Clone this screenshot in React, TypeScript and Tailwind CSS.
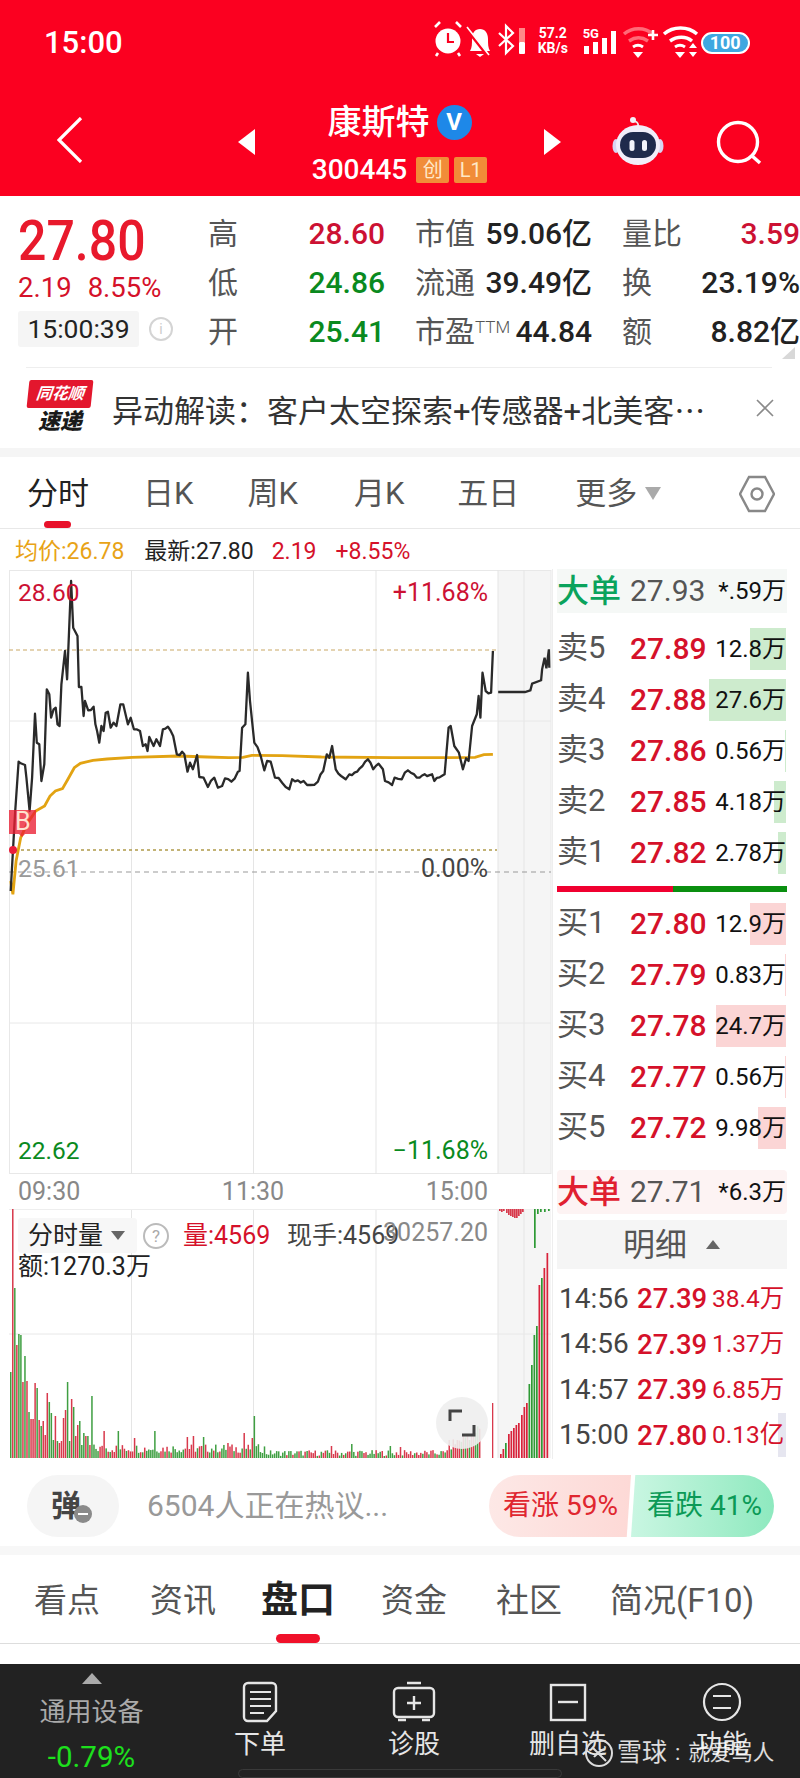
import React from 'react';

// price line and average line, in the coordinates of a 560x340 crop scaled 2.8 x 3
const priceLine = [
  [30, 990], [42, 760], [52, 602], [58, 607], [70, 612], [74, 650], [83, 750], [90, 650], [98, 458], [103, 545], [110, 550], [116, 660], [124, 610], [131, 385], [138, 400], [143, 470], [150, 445], [156, 440], [161, 490], [167, 495], [172, 370], [182, 270], [188, 355], [199, 60], [205, 200], [217, 225], [221, 378], [228, 378], [234, 465], [238, 420], [247, 448], [262, 437], [267, 490], [272, 510], [278, 545], [284, 495], [290, 510], [296, 455], [302, 452], [310, 500], [318, 485], [326, 495], [337, 430], [345, 430], [358, 490], [366, 470], [375, 505], [392, 510], [400, 555], [408, 550], [413, 570], [418, 528], [430, 555], [438, 535], [448, 555], [456, 505], [470, 497], [485, 525], [495, 580], [510, 572], [516, 580], [525, 632], [532, 605], [540, 625], [552, 582], [558, 648], [570, 650], [582, 678], [600, 650], [610, 680], [622, 675], [630, 652], [648, 662], [666, 632], [671, 630], [678, 500], [687, 490], [694, 335], [700, 420], [712, 545], [730, 585], [740, 628], [748, 600], [758, 602], [770, 650], [790, 665], [810, 685], [818, 655], [850, 660], [870, 672], [890, 662], [905, 630], [915, 580], [922, 590], [930, 555], [940, 625], [955, 645], [968, 655], [978, 640], [1000, 632], [1030, 595], [1045, 625], [1060, 608], [1072, 625], [1078, 660], [1098, 672], [1105, 650], [1125, 655], [1142, 628], [1175, 650], [1210, 640], [1216, 660], [1245, 640], [1256, 500], [1262, 495], [1272, 555], [1285, 575], [1296, 625], [1305, 592], [1312, 600], [1322, 495], [1335, 460], [1340, 405], [1345, 470], [1351, 335], [1360, 390], [1375, 395], [1380, 270],
];
const avgLine = [
  [30, 960], [36, 1000], [45, 900], [58, 830], [75, 790], [100, 750], [125, 735], [140, 705], [155, 690], [175, 683], [190, 655], [208, 620], [225, 607], [260, 598], [300, 594], [370, 589], [500, 585], [580, 588], [640, 590], [680, 589], [705, 583], [790, 584], [900, 588], [1100, 590], [1250, 590], [1330, 589], [1355, 581], [1380, 580],
];
const afterLine = [[1395, 393], [1470, 393], [1485, 388], [1490, 368], [1515, 358], [1518, 325], [1525, 290], [1530, 322], [1537, 265], [1538, 320]];

const toPts = (line: number[][]) => line.map(([x, y]) => `${(x / 2.8).toFixed(1)},${(y / 3 - 9).toFixed(1)}`).join(' ');

const rand = (i: number) => {
  const s = Math.sin(i * 12.9898) * 43758.5453;
  return s - Math.floor(s);
};

// long segments of the hand-read line get some minute-to-minute jitter
const jagged = priceLine.flatMap(([x, y], i) => {
  const next = priceLine[i + 1];
  if (!next || next[0] - x < 14) return [[x, y]];
  const n = Math.floor((next[0] - x) / 7);
  return Array.from({ length: n }, (_, k) => {
    const t = k / n;
    const noise = k === 0 ? 0 : (rand(i * 31 + k) - 0.5) * 14;
    return [x + (next[0] - x) * t, y + (next[1] - y) * t + noise];
  });
});

const earlyBars = [86, 249, 170, 113, 124, 123, 76, 102, 77, 46, 39, 39, 75, 70, 38, 32, 37, 23, 65, 56, 45, 18, 42, 17, 15, 17, 40, 48, 76, 17, 59, 51, 22, 33, 37, 13, 25, 22, 22, 13, 62];
const earlyColors = 'grgrggrgrgrrrgrgrrrgggrgrrrrggrgrrgggrgrg';
const spikes: Record<number, [number, string]> = {
  46: [27, 'r'], 53: [27, 'g'], 61: [20, 'r'], 71: [27, 'g'], 87: [21, 'r'], 90: [22, 'r'], 95: [21, 'g'], 107: [15, 'r'], 115: [25, 'r'], 119: [20, 'r'], 120: [42, 'g'], 158: [12, 'r'], 168: [14, 'g'], 187: [12, 'g'], 192: [11, 'r'],
};

const volumeBars = Array.from({ length: 232 }, (_, i) => {
  if (i < earlyBars.length) return { h: earlyBars[i], c: earlyColors[i] };
  if (spikes[i]) return { h: spikes[i][0], c: spikes[i][1] };
  const r = rand(i);
  let h = 5 + r * 9;
  if (i > 125 && i < 215) h = 2 + r * 6;
  if (i >= 215) h = 5 + r * 12 + (i - 215) * 1.1;
  const c = i > 120 && i < 135 ? 'g' : rand(i + 500) > 0.5 ? 'r' : 'g';
  return { h, c };
});

// after-hours panel, x + height
const panelBars = [
  [500, 4, 'r'], [502.5, 9, 'r'], [505, 15, 'g'], [508, 24, 'r'], [510.5, 27, 'r'], [513, 30, 'r'], [515.5, 33, 'r'], [518, 35, 'r'], [521, 43, 'r'], [523.5, 51, 'r'], [526, 55, 'r'], [528.5, 74, 'g'], [531, 93, 'g'], [533.5, 123, 'g'], [536, 132, 'g'], [538.5, 173, 'r'], [541, 180, 'g'], [543.5, 190, 'r'], [546.5, 205, 'r'],
] as [number, number, string][];
const panelTop = [[499, 2, 'r'], [501, 3, 'r'], [503, 2, 'r'], [506, 4, 'r'], [508, 6, 'r'], [510, 7, 'r'], [512, 8, 'r'], [514, 9, 'r'], [516, 9, 'r'], [518, 7, 'r'], [520, 5, 'r'], [522, 3, 'r'], [534, 39, 'g'], [537, 5, 'g'], [540, 3, 'g'], [544, 3, 'g'], [548, 2, 'g']] as [number, number, string][];

const sells = [
  ['卖5', '27.89', '12.8万', 36],
  ['卖4', '27.88', '27.6万', 77],
  ['卖3', '27.86', '0.56万', 1],
  ['卖2', '27.85', '4.18万', 12],
  ['卖1', '27.82', '2.78万', 8],
] as [string, string, string, number][];
const buys = [
  ['买1', '27.80', '12.9万', 36],
  ['买2', '27.79', '0.83万', 1],
  ['买3', '27.78', '24.7万', 70],
  ['买4', '27.77', '0.56万', 1],
  ['买5', '27.72', '9.98万', 28],
] as [string, string, string, number][];
const deals = [
  ['14:56', '27.39', '38.4万'],
  ['14:56', '27.39', '1.37万'],
  ['14:57', '27.39', '6.85万'],
  ['15:00', '27.80', '0.13亿'],
];

function QuoteRow({ a, b, c, d, e, f, bc }: { a: string; b: string; c: React.ReactNode; d: string; e: string; f: string; bc: string }) {
  return (
    <div className="flex h-[49px] items-center text-[30px] leading-none">
      <div className="flex w-[177px] justify-between">
        <span className="text-[#555]">{a}</span>
        <span className={`font-medium ${bc}`}>{b}</span>
      </div>
      <div className="ml-[30px] flex w-[177px] items-center justify-between">{c}</div>
      <div className="ml-[30px] flex w-[178px] justify-between">
        <span className="text-[#555]">{d}</span>
        <span className={`font-medium ${f}`}>{e}</span>
      </div>
    </div>
  );
}

function BookRow({ row, bar }: { row: [string, string, string, number]; bar: string }) {
  return (
    <div className="relative flex h-[51px] items-center pl-[4px]">
      <span className="w-[73px] text-[31px] text-[#555]">{row[0]}</span>
      <span className="text-[30px] font-medium text-[#d5112a]">{row[1]}</span>
      <div className="absolute right-[14px] top-1/2 h-[42px] -translate-y-1/2" style={{ width: row[3] }}>
        <div className={`h-full w-full ${bar}`} />
      </div>
      <span className="absolute right-[14px] text-[24px] text-[#111]">{row[2]}</span>
    </div>
  );
}

function StatusIcons() {
  return (
    <svg width="340" height="60" viewBox="0 0 340 60" className="block">
      {/* alarm */}
      <circle cx="27" cy="28" r="12.5" fill="#fff" />
      <path d="M27 20v9h6" stroke="#fb0020" strokeWidth="2.2" fill="none" />
      <path d="M14 14l5-5M35 9l5 5M17 40l-2 3M37 40l2 3" stroke="#fff" strokeWidth="2.6" />
      {/* muted bell */}
      <path d="M49 38c2-3 2-7 2-12 0-6 3-10 8-10s8 4 8 10c0 5 0 9 2 12z" fill="#fff" />
      <path d="M55 41h8l-4 3z" fill="#fff" />
      <path d="M45 15l22 28" stroke="#fb0020" strokeWidth="3.4" />
      <path d="M46 14l22 28" stroke="#fff" strokeWidth="1.6" />
      {/* bluetooth + small bar */}
      <path d="M78 20l14 13-7 7V13l7 7-14 13" stroke="#fff" strokeWidth="2.2" fill="none" />
      <rect x="98" y="15" width="6" height="14" fill="#f88" />
      <rect x="98" y="29" width="6" height="12" rx="1" fill="#fff" />
      {/* network signal */}
      <rect x="163" y="33" width="5" height="8" fill="#fff" />
      <rect x="172" y="29" width="5" height="12" fill="#fff" />
      <rect x="181" y="25" width="5" height="16" fill="#fff" />
      <rect x="190" y="18" width="5" height="23" fill="#fff" />
      {/* wifi one */}
      <path d="M203 21c8-7 21-7 29 0" stroke="#ff6a78" strokeWidth="3.4" fill="none" />
      <path d="M208 28c6-4 13-4 19 0" stroke="#ff6a78" strokeWidth="3.4" fill="none" />
      <path d="M212 34c3-2 7-2 10 0" stroke="#fff" strokeWidth="3" fill="none" />
      <path d="M212 39h10l-5 6z" fill="#fff" />
      <path d="M227 22h10M232 17v10" stroke="#fff" strokeWidth="2.6" />
      {/* wifi two */}
      <path d="M243 21c9-8 24-8 33 0" stroke="#fff" strokeWidth="3.4" fill="none" />
      <path d="M249 28c7-5 16-5 22 0" stroke="#fff" strokeWidth="3.4" fill="none" />
      <path d="M254 34c3-2 7-2 10 0" stroke="#fff" strokeWidth="3" fill="none" />
      <path d="M254 39h10l-5 6z" fill="#fff" />
      <path d="M268 35l4-5 4 5zM268 39l4 5 4-5z" fill="#fff" />
    </svg>
  );
}

function Robot() {
  return (
    <svg width="52" height="50" viewBox="0 0 52 50">
      <path d="M26 12c1-5-2-5-4-6" stroke="#eee" strokeWidth="1.8" fill="none" />
      <circle cx="21" cy="5" r="3" fill="#f3eef7" />
      <ellipse cx="4" cy="31" rx="3.5" ry="7" fill="#d8d4f2" />
      <ellipse cx="48" cy="31" rx="3.5" ry="7" fill="#d8d4f2" />
      <ellipse cx="26" cy="30" rx="22" ry="20" fill="#f1eefa" />
      <rect x="8" y="17" width="36" height="26" rx="13" fill="#1f2a4c" />
      <rect x="17.5" y="25" width="5" height="11" rx="2.5" fill="#f2f2fa" />
      <rect x="30" y="25" width="5" height="11" rx="2.5" fill="#f2f2fa" />
    </svg>
  );
}

export default function App() {
  return (
    <div className="relative flex h-[1778px] w-[800px] flex-col overflow-hidden bg-white font-[Roboto,'Noto_Sans_CJK_SC',sans-serif]">
      {/* red header */}
      <div className="h-[196px] shrink-0 bg-[#fb0020] text-white">
        <div className="flex h-[100px] pt-[13px]">
          <span className="ml-[44px] mt-[10px] text-[31px] font-medium leading-[40px]">15:00</span>
          <div className="relative ml-[298px]">
            <StatusIcons />
            <div className="absolute left-[117px] top-[13px] text-center text-[14px] font-bold leading-[15px]">
              57.2
              <br />
              KB/s
            </div>
            <span className="absolute left-[162px] top-[14px] text-[13px] font-bold leading-none">5G</span>
            <div className="absolute left-[280px] top-[19px] flex h-[22px] w-[49px] items-center justify-center rounded-full border-2 border-white bg-[#3fa7e0] text-[18px] font-bold leading-none">
              100
            </div>
          </div>
        </div>
        <div className="flex h-[96px] items-start">
          <svg width="26" height="46" viewBox="0 0 26 46" className="ml-[57px] mt-[17px]">
            <path d="M24 1L2 23l22 22" stroke="#fff" strokeWidth="3.2" fill="none" />
          </svg>
          <div className="ml-[155px] mt-[29px] h-0 w-0 border-y-[13px] border-r-[17px] border-y-transparent border-r-white" />
          <div className="flex w-[289px] flex-col items-center">
            <div className="flex h-[44px] items-center gap-[7px]">
              <span className="text-[34px] font-medium leading-none">康斯特</span>
              <div className="flex h-[35px] w-[35px] items-center justify-center rounded-full bg-[#1e88e8] text-[24px] font-bold leading-none">V</div>
            </div>
            <div className="mt-[12px] flex h-[28px] items-center gap-[5px]">
              <span className="mr-[4px] text-[28px] font-medium leading-none">300445</span>
              <span className="flex h-[26px] w-[33px] items-center justify-center rounded-[2px] bg-[#f18c38] text-[20px] leading-none text-[#ffe8c8]">创</span>
              <span className="flex h-[26px] w-[33px] items-center justify-center rounded-[2px] bg-[#f18c38] text-[20px] leading-none text-[#ffe8c8]">L1</span>
            </div>
          </div>
          <div className="mt-[29px] h-0 w-0 border-y-[13px] border-l-[17px] border-y-transparent border-l-white" />
          <div className="ml-[51px] mt-[15px]">
            <Robot />
          </div>
          <svg width="46" height="46" viewBox="0 0 46 46" className="ml-[52px] mt-[20px]">
            <circle cx="22" cy="22" r="19.5" stroke="#fff" strokeWidth="3.4" fill="none" />
            <path d="M35 35l9 8" stroke="#fff" strokeWidth="3.4" />
          </svg>
        </div>
      </div>

      {/* quote */}
      <div className="relative flex h-[172px] shrink-0">
        <div className="w-[208px] pl-[18px]">
          <div className="mt-[18px] origin-left scale-y-110 text-[50px] font-medium leading-[54px] text-[#e8192c]">27.80</div>
          <div className="mt-[5px] flex gap-[16px] text-[27.5px] leading-[30px] text-[#d5112a]">
            <span>2.19</span>
            <span>8.55%</span>
          </div>
          <div className="mt-[8px] flex items-center">
            <div className="flex h-[36px] w-[121px] items-center justify-center rounded-[3px] bg-[#f5f5f5] text-[26.5px] leading-none text-[#222]">15:00:39</div>
            <div className="ml-[10px] flex h-[24px] w-[24px] items-center justify-center rounded-full border-2 border-[#d4d4d4] text-[14px] leading-none text-[#ccc]">i</div>
          </div>
        </div>
        <div className="pt-[13px]">
          <QuoteRow
            a="高"
            b="28.60"
            bc="text-[#cc1133]"
            c={
              <>
                <span className="text-[#555]">市值</span>
                <span className="font-medium text-[#222]">59.06亿</span>
              </>
            }
            d="量比"
            e="3.59"
            f="text-[#cc1133]"
          />
          <QuoteRow
            a="低"
            b="24.86"
            bc="text-[#0a8a1e]"
            c={
              <>
                <span className="text-[#555]">流通</span>
                <span className="font-medium text-[#222]">39.49亿</span>
              </>
            }
            d="换"
            e="23.19%"
            f="text-[#222]"
          />
          <QuoteRow
            a="开"
            b="25.41"
            bc="text-[#0a8a1e]"
            c={
              <>
                <span className="text-[#555]">
                  市盈<sup className="text-[17px] font-light">TTM</sup>
                </span>
                <span className="font-medium text-[#222]">44.84</span>
              </>
            }
            d="额"
            e="8.82亿"
            f="text-[#222]"
          />
        </div>
        <div className="absolute bottom-[9px] right-[5px] h-0 w-0 border-b-[12px] border-l-[13px] border-b-[#d8d8d8] border-l-transparent" />
        <div className="absolute bottom-0 left-[26px] right-[28px] h-px bg-[#eee]" />
      </div>

      {/* news strip */}
      <div className="flex h-[80px] shrink-0 items-center">
        <div className="ml-[28px] flex h-[56px] w-[64px] flex-col items-center">
          <div className="flex h-[28px] w-[64px] -skew-x-6 items-center justify-center rounded-[2px] bg-[#e3172d] text-[16px] font-bold italic leading-none text-white">同花顺</div>
          <span className="mt-[2px] text-[22px] font-black italic leading-[24px] text-[#1a1a1a]">速递</span>
        </div>
        <span className="ml-[20px] mt-[4px] w-[643px] whitespace-nowrap text-[31px] leading-none text-[#333]">
          异动解读：客户太空探索+传感器+北美客<span className="font-['Noto_Sans_CJK_TC']">…</span>
        </span>
        <svg width="20" height="20" viewBox="0 0 20 20">
          <path d="M2 2l16 16M18 2L2 18" stroke="#8a8a8a" strokeWidth="1.6" />
        </svg>
      </div>
      <div className="h-[9px] shrink-0 bg-[#f5f5f5]" />

      {/* period tabs */}
      <div className="relative flex h-[72px] shrink-0 items-center border-b border-[#e8e8e8] pt-[2px] text-[31px] leading-none text-[#555]">
        <span className="ml-[27px] text-[#222]">分时</span>
        <span className="ml-[54px]">日K</span>
        <span className="ml-[54px]">周K</span>
        <span className="ml-[56px]">月K</span>
        <span className="ml-[53px]">五日</span>
        <span className="ml-[56px]">更多</span>
        <div className="ml-[8px] h-0 w-0 border-x-[8px] border-t-[13px] border-x-transparent border-t-[#aaa]" />
        <svg width="36" height="38" viewBox="0 0 36 38" className="ml-[78px]">
          <path d="M10 2h16l9 17-9 17H10L1 19z" stroke="#888" strokeWidth="2.4" fill="none" />
          <circle cx="18" cy="19" r="5.5" stroke="#888" strokeWidth="2.4" fill="none" />
        </svg>
        <div className="absolute bottom-0 left-[44px] h-[7px] w-[27px] rounded-full bg-[#e8112a]" />
      </div>

      {/* info line */}
      <div className="flex h-[40px] shrink-0 items-center pl-[15px] pt-[4px] text-[23px] leading-none">
        <span className="text-[#e8a317]">均价:26.78</span>
        <span className="ml-[20px] text-[#222]">最新:27.80</span>
        <span className="ml-[18px] text-[#d5112a]">2.19</span>
        <span className="ml-[19px] text-[#d5112a]">+8.55%</span>
      </div>

      <div className="flex h-[890px] shrink-0">
        {/* charts column */}
        <div className="w-[552px] shrink-0">
          <div className="relative mt-[1px] h-[604px]">
            <svg width="552" height="604" viewBox="0 0 552 604" className="block">
              <rect x="498" y="0" width="53" height="604" fill="#f5f5f5" />
              <rect x="9.5" y="0.5" width="541.5" height="603" fill="none" stroke="#e8e8e8" />
              {[131.5, 253.5, 376, 498, 524].map((x) => (
                <line key={x} x1={x} x2={x} y1="0" y2="604" stroke="#e5e5e5" />
              ))}
              {[151, 453].map((y) => (
                <line key={y} x1="9" x2="551" y1={y} y2={y} stroke="#e8e8e8" />
              ))}
              <line x1="9" x2="551" y1="302" y2="302" stroke="#999" strokeDasharray="5 4" />
              <line x1="9" x2="497" y1="80" y2="80" stroke="#c9a765" strokeDasharray="4 3" />
              <line x1="9" x2="497" y1="280" y2="280" stroke="#b09a4a" strokeDasharray="3 3" strokeWidth="1.5" />
              <polyline points={toPts(avgLine)} fill="none" stroke="#e2a312" strokeWidth="2.8" />
              <polyline points={toPts(jagged)} fill="none" stroke="#2a2a2a" strokeWidth="2.3" strokeLinejoin="round" />
              <polyline points={toPts(afterLine)} fill="none" stroke="#2a2a2a" strokeWidth="2.3" />
              <path d="M9 240h27v24H25l-3 3-3-3H9z" fill="#ea1e32" fillOpacity="0.78" />
              <circle cx="13" cy="280" r="4" fill="#ea1e3c" />
            </svg>
            <span className="absolute left-[15px] top-[239px] text-[25px] leading-[26px] text-[#ffe1d0]">B</span>
            <span className="absolute left-[18px] top-[10px] text-[24.5px] leading-[26px] text-[#cc1133]">28.60</span>
            <span className="absolute right-[64px] top-[10px] text-[25px] leading-[26px] text-[#cc1133]">+11.68%</span>
            <span className="absolute left-[18px] top-[286px] text-[24.5px] leading-[26px] text-[#999]">25.61</span>
            <span className="absolute right-[64px] top-[286px] text-[25px] leading-[26px] text-[#444]">0.00%</span>
            <span className="absolute bottom-[10px] left-[18px] text-[24.5px] leading-[26px] text-[#0a8a1e]">22.62</span>
            <span className="absolute bottom-[10px] right-[64px] text-[25px] leading-[26px] text-[#0a8a1e]">−11.68%</span>
          </div>

          <div className="flex h-[35px] items-center justify-between pl-[18px] pr-[64px] text-[25px] leading-none text-[#888]">
            <span>09:30</span>
            <span>11:30</span>
            <span>15:00</span>
          </div>

          <div className="relative h-[249px]">
            <svg width="552" height="249" viewBox="0 0 552 249" className="block">
              <rect x="498" y="0" width="53" height="249" fill="#f5f5f5" />
              {[131.5, 253.5, 376, 498, 524].map((x) => (
                <line key={x} x1={x} x2={x} y1="0" y2="249" stroke="#e5e5e5" />
              ))}
              <line x1="9" x2="551" y1="125" y2="125" stroke="#e8e8e8" />
              <line x1="9" x2="551" y1="0.5" y2="0.5" stroke="#eee" />
              {volumeBars.map((b, i) => (
                <rect key={i} x={10 + 2.03 * i} y={249 - b.h} width="1.5" height={b.h} fill={b.c === 'r' ? '#d8394c' : '#3f9f42'} />
              ))}
              <rect x="492" y="194" width="1.3" height="55" fill="#d8394c" />
              {panelBars.map(([x, h, c]) => (
                <rect key={x} x={x} y={249 - h} width="1.7" height={h} fill={c === 'r' ? '#d8223a' : '#2e9a35'} />
              ))}
              {panelTop.map(([x, h, c]) => (
                <rect key={x} x={x} y="0" width="1.7" height={h} fill={c === 'r' ? '#d8394c' : '#2e9a35'} />
              ))}
            </svg>
            <div className="absolute left-[18px] top-[9px] flex h-[35px] w-[119px] items-center rounded-[3px] bg-[#f7f7f7] pl-[10px] text-[25px] leading-none text-[#222]">
              分时量
              <div className="ml-[8px] h-0 w-0 border-x-[7px] border-t-[9px] border-x-transparent border-t-[#666]" />
            </div>
            <div className="absolute left-[143px] top-[14px] flex h-[26px] w-[26px] items-center justify-center rounded-full border-2 border-[#bbb] text-[17px] leading-none text-[#aaa]">?</div>
            <span className="absolute left-[183px] top-[14px] text-[25px] leading-[26px] text-[#d5112a]">量:4569</span>
            <span className="absolute left-[287px] top-[14px] text-[25px] leading-[26px] text-[#444]">现手:4569</span>
            <span className="absolute right-[64px] top-[11px] text-[25px] leading-[26px] text-[#888]">30257.20</span>
            <span className="absolute left-[18px] top-[45px] text-[25px] leading-[26px] text-[#222]">额:1270.3万</span>
            <div className="absolute left-[436px] top-[188px] flex h-[52px] w-[52px] items-center justify-center rounded-full bg-[#eeeeee]/90">
              <svg width="28" height="28" viewBox="0 0 28 28">
                <path d="M2 12V2h12M26 16v10H14" stroke="#444" strokeWidth="3" fill="none" />
              </svg>
            </div>
          </div>
        </div>

        {/* order book */}
        <div className="w-[248px] shrink-0 border-l border-[#eee]">
          <div className="ml-[4px] flex h-[44px] w-[230px] items-center bg-[#f5f8f6]">
            <span className="w-[73px] text-[32px] font-medium leading-none text-[#0aa35c]">大单</span>
            <span className="text-[30px] leading-none text-[#555]">27.93</span>
            <span className="ml-auto mr-[1px] text-[24px] leading-none text-[#111]">*.59万</span>
          </div>
          <div className="mt-[10px]">
            {sells.map((r) => (
              <BookRow key={r[0]} row={r} bar="bg-[#cdebcd]" />
            ))}
          </div>
          <div className="ml-[4px] mt-[8px] flex h-[6px] w-[230px]">
            <div className="w-[116px] bg-[#f00030]" />
            <div className="flex-1 bg-[#0a8f10]" />
          </div>
          <div className="mt-[6px]">
            {buys.map((r) => (
              <BookRow key={r[0]} row={r} bar="bg-[#fbd5d5]" />
            ))}
          </div>
          <div className="ml-[4px] mt-[17px] flex h-[44px] w-[230px] items-center rounded-[4px] bg-[#fdf3f3]">
            <span className="w-[73px] text-[32px] font-medium leading-none text-[#e02030]">大单</span>
            <span className="text-[30px] leading-none text-[#555]">27.71</span>
            <span className="ml-auto mr-[1px] text-[24px] leading-none text-[#111]">*6.3万</span>
          </div>
          <div className="ml-[4px] mt-[6px] flex h-[49px] w-[230px] items-center bg-[#f5f5f5] pl-[66px] text-[32px] leading-none text-[#555]">
            明细
            <div className="ml-[19px] h-0 w-0 border-x-[7px] border-b-[9px] border-x-transparent border-b-[#666]" />
          </div>
          <div className="mt-[7px]">
            {deals.map((d, i) => (
              <div key={i} className="relative flex h-[45.5px] items-center pl-[6px]">
                {i === 3 && <div className="absolute right-[14px] h-[44px] w-[8px] bg-[#e6e6f0]" />}
                <span className="relative w-[78px] text-[28px] leading-none text-[#444]">{d[0]}</span>
                <span className="relative w-[75px] text-[27.5px] font-medium leading-none text-[#d5112a]">{d[1]}</span>
                <span className="relative text-[24.5px] leading-none text-[#d5112a]">{d[2]}</span>
              </div>
            ))}
          </div>
        </div>
      </div>

      {/* danmaku + vote */}
      <div className="flex h-[87px] shrink-0 items-center pb-[4px] pt-[11px]">
        <div className="relative ml-[27px] flex h-[62px] w-[92px] items-center justify-center rounded-full bg-[#f5f5f5] pr-[14px]">
          <span className="text-[30px] font-bold leading-none text-[#444]">弹</span>
          <div className="absolute left-[47px] top-[30px] flex h-[18px] w-[18px] items-center justify-center rounded-full bg-[#8a8a8a]">
            <div className="h-[2px] w-[10px] bg-white" />
          </div>
        </div>
        <span className="ml-[28px] text-[30px] leading-none text-[#999]">6504人正在热议...</span>
        <div className="ml-auto mr-[26px] flex h-[62px]">
          <div className="flex w-[142px] items-center rounded-l-full bg-gradient-to-r from-[#fde8e6] to-[#fdd9d6] pl-[14px] text-[28px] leading-none text-[#e0262f] [clip-path:polygon(0_0,100%_0,97%_100%,0_100%)]">看涨 59%</div>
          <div className="flex w-[143px] items-center rounded-r-full bg-gradient-to-r from-[#c9f6e2] to-[#8ee9bf] pl-[16px] text-[28px] leading-none text-[#0b9a57] [clip-path:polygon(3%_0,100%_0,100%_100%,0_100%)]">看跌 41%</div>
        </div>
      </div>
      <div className="h-[9px] shrink-0 bg-[#f7f7f7]" />

      {/* bottom tabs */}
      <div className="relative flex h-[89px] shrink-0 items-center border-b border-[#ddd] pt-[3px] text-[33px] leading-none text-[#555]">
        <span className="ml-[34px]">看点</span>
        <span className="ml-[50px]">资讯</span>
        <span className="ml-[45px] text-[37px] font-bold text-[#222]">盘口</span>
        <span className="ml-[46px]">资金</span>
        <span className="ml-[49px]">社区</span>
        <span className="ml-[48px]">简况(F10)</span>
        <div className="absolute bottom-0 left-[276px] h-[9px] w-[44px] rounded-full bg-[#f0112a]" />
      </div>
      <div className="h-[20px] shrink-0" />

      {/* bottom bar */}
      <div className="relative flex h-[114px] shrink-0 bg-[#222] text-[26px] leading-none">
        <div className="flex w-[183px] flex-col items-center text-center">
          <div className="mt-[9px] h-0 w-0 border-x-[10px] border-b-[11px] border-x-transparent border-b-[#aaa]" />
          <span className="mt-[13px] leading-[30px] text-[#aaa]">通用设备</span>
          <span className="mt-[15px] text-[29.5px] leading-[30px] text-[#1de01d]">-0.79%</span>
        </div>
        <div className="flex w-[154px] flex-col items-center text-[#e6e6e6]">
          <svg width="38" height="42" viewBox="0 0 38 42" className="mt-[17px]">
            <path d="M7 2h24a4 4 0 014 4v24l-9 10H7a4 4 0 01-4-4V6a4 4 0 014-4z" stroke="#e6e6e6" strokeWidth="2.4" fill="none" />
            <path d="M9 11h21M9 18h21M9 25h21M9 32h14" stroke="#e6e6e6" strokeWidth="2.2" />
          </svg>
          <span className="mt-[6px] leading-[30px]">下单</span>
        </div>
        <div className="flex w-[154px] flex-col items-center text-[#e6e6e6]">
          <svg width="44" height="42" viewBox="0 0 44 42" className="mt-[17px]">
            <rect x="2" y="7" width="40" height="29" rx="4" stroke="#e6e6e6" strokeWidth="2.4" fill="none" />
            <path d="M15 2h14M22 15v14M15 22h14M6 39h8M30 39h8" stroke="#e6e6e6" strokeWidth="2.4" />
          </svg>
          <span className="mt-[6px] leading-[30px]">诊股</span>
        </div>
        <div className="flex w-[154px] flex-col items-center text-[#e6e6e6]">
          <svg width="38" height="42" viewBox="0 0 38 42" className="mt-[17px]">
            <rect x="2" y="4" width="34" height="35" stroke="#e6e6e6" strokeWidth="2.4" fill="none" />
            <path d="M9 21h20" stroke="#e6e6e6" strokeWidth="2.4" />
          </svg>
          <span className="mt-[6px] leading-[30px]">删自选</span>
        </div>
        <div className="flex w-[154px] flex-col items-center text-[#e6e6e6]">
          <svg width="40" height="42" viewBox="0 0 40 42" className="mt-[17px]">
            <circle cx="20" cy="21" r="18" stroke="#e6e6e6" strokeWidth="2.2" fill="none" />
            <path d="M11 15h18M11 27h18" stroke="#e6e6e6" strokeWidth="2.2" />
          </svg>
          <span className="mt-[6px] leading-[30px]">功能</span>
        </div>
        <div className="absolute left-[238px] top-[105px] h-[9px] w-[324px] rounded-full border border-[#3a3a3a]" />
        {/* watermark */}
        <div className="absolute left-[584px] top-[74px] flex items-center text-white/85">
          <svg width="30" height="30" viewBox="0 0 30 30">
            <circle cx="15" cy="15" r="13" stroke="#ddd" strokeWidth="2" fill="none" />
            <path d="M8 9l14 14M10 19c3-4 6-6 10-8" stroke="#ddd" strokeWidth="2" fill="none" />
          </svg>
          <span className="ml-[3px] text-[25px] leading-[30px]">雪球</span>
          <span className="mx-[8px] text-[22px] leading-[30px]">:</span>
          <span className="text-[21.5px] leading-[30px]">就爱骂人</span>
        </div>
      </div>
    </div>
  );
}
